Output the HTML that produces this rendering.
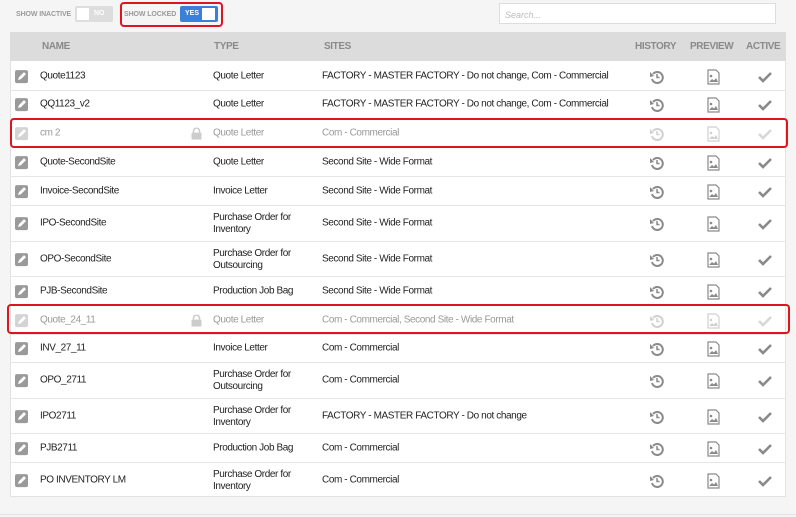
<!DOCTYPE html><html><head><style>
body{margin:0;width:796px;height:517px;background:#f5f5f5;font-family:"Liberation Sans",sans-serif;position:relative;overflow:hidden}
.a{position:absolute}
.lbl{font-size:7px;color:#999;font-weight:bold;letter-spacing:-0.1px}
.tbl{left:10px;top:32px;width:776px;height:465px;background:#fff;border:1px solid #e2e2e2;box-sizing:border-box}
.hd{left:10px;top:32px;width:776px;height:29px;background:#dcdcdc;font-size:10px;color:#8a8a8a;font-weight:bold;letter-spacing:-0.4px}
.hd span{position:absolute;top:9px}
.row{position:absolute;left:10px;width:776px;border-bottom:1px solid #e6e6e6;font-size:10px;color:#222;letter-spacing:-0.4px}
.row .c{position:absolute;top:50%;transform:translateY(-45%);line-height:12px}
.ed{left:5px;width:13px;height:13px;background:#9a9a9a;border-radius:2px}
.dim{color:#999}
.dim .ed{background:#d4d4d4}
.red{position:absolute;border:2px solid #e0141e;border-radius:4px;box-sizing:border-box}
</style></head><body>
<div class="a lbl" style="left:16px;top:11px">SHOW INACTIVE</div>
<div class="a" style="left:75px;top:6px;width:38px;height:16px;background:#ddd;border-radius:2px"><div class="a" style="left:2px;top:2px;width:12px;height:12px;background:#fff"></div><span class="a" style="left:19px;top:4px;font-size:7px;color:#fff;font-weight:bold">NO</span></div>
<div class="a lbl" style="left:124px;top:11px">SHOW LOCKED</div>
<div class="a" style="left:180px;top:6px;width:38px;height:16px;background:#3c7fd8;border-radius:2px"><span class="a" style="left:5px;top:4px;font-size:7px;color:#fff;font-weight:bold">YES</span><div class="a" style="left:22px;top:2px;width:13px;height:12px;background:#fff"></div></div>
<div class="red" style="left:120px;top:2px;width:103px;height:25px"></div>
<div class="a" style="left:499px;top:3px;width:277px;height:21px;background:#fff;border:1px solid #ddd;box-sizing:border-box;font-size:9px;color:#bbb;padding:6px 5px;font-style:italic">Search...</div>
<div class="a tbl"></div>
<div class="a hd"><span style="left:32px">NAME</span><span style="left:204px">TYPE</span><span style="left:314px">SITES</span><span style="left:625px">HISTORY</span><span style="left:680px">PREVIEW</span><span style="left:736px">ACTIVE</span></div>
<svg width="0" height="0" style="position:absolute"><defs>
<g id="h"><path d="M-4,-3 A5.5,5.5 0 1 1 -5,2" fill="none" stroke="currentColor" stroke-width="2"/><path d="M-7,-5 L-3,-1 L-7,0Z" fill="currentColor"/><path d="M0,-3 V0.5 H2.5" fill="none" stroke="currentColor" stroke-width="1.5"/></g>
<g id="p"><path d="M-5,-7 H3 L6,-4 V7 H-5Z" fill="none" stroke="currentColor" stroke-width="1.2"/><circle cx="-2" cy="-1" r="1.3" fill="currentColor"/><path d="M-4,5 L-1,2 L1,3.5 L3,1 L5,5Z" fill="currentColor"/></g>
<g id="k"><path d="M-6,0 L-2,4 L6,-4" fill="none" stroke="currentColor" stroke-width="2.6"/></g>
</defs></svg>
<div id="rows"></div>
<script>
var R=[["Quote1123","Quote Letter","FACTORY - MASTER FACTORY - Do not change, Com - Commercial",61,29],
["QQ1123_v2","Quote Letter","FACTORY - MASTER FACTORY - Do not change, Com - Commercial",90,28],
["cm 2","Quote Letter","Com - Commercial",118,29,1],
["Quote-SecondSite","Quote Letter","Second Site - Wide Format",147,29],
["Invoice-SecondSite","Invoice Letter","Second Site - Wide Format",176,29],
["IPO-SecondSite","Purchase Order for<br>Inventory","Second Site - Wide Format",205,36],
["OPO-SecondSite","Purchase Order for<br>Outsourcing","Second Site - Wide Format",241,35],
["PJB-SecondSite","Production Job Bag","Second Site - Wide Format",276,29],
["Quote_24_11","Quote Letter","Com - Commercial, Second Site - Wide Format",305,29,1],
["INV_27_11","Invoice Letter","Com - Commercial",334,28],
["OPO_2711","Purchase Order for<br>Outsourcing","Com - Commercial",362,36],
["IPO2711","Purchase Order for<br>Inventory","FACTORY - MASTER FACTORY - Do not change",398,35],
["PJB2711","Production Job Bag","Com - Commercial",433,29],
["PO INVENTORY LM","Purchase Order for<br>Inventory","Com - Commercial",462,35]];
var h="";
R.forEach(function(r){var d=r[5],ic=d?"#d0d0d0":"#8a8a8a";
h+='<div class="row'+(d?' dim':'')+'" style="top:'+r[3]+'px;height:'+r[4]+'px'+(r==R[13]?';border-bottom:none':'')+'">'+
'<div class="c ed"><svg width="13" height="13"><path d="M3,10 L4,7 L9,2 L11,4 L6,9Z" fill="#fff"/></svg></div>'+
'<div class="c" style="left:30px">'+r[0]+'</div>'+
(d?'<div class="c" style="left:181px;width:10px;height:12px"><svg width="11" height="12"><path d="M2.5,5 V3.5 A3,3 0 0 1 8.5,3.5 V5" fill="none" stroke="#ccc" stroke-width="1.6"/><rect x="0.5" y="5" width="10" height="7" rx="1" fill="#ccc"/></svg></div>':'')+
'<div class="c" style="left:203px">'+r[1]+'</div>'+
'<div class="c" style="left:312px">'+r[2]+'</div>'+
'<svg class="c" style="left:637px;color:'+ic+'" width="20" height="20" viewBox="-10 -10 20 20"><use href="#h"/></svg>'+
'<svg class="c" style="left:693px;color:'+ic+'" width="20" height="20" viewBox="-10 -10 20 20"><use href="#p"/></svg>'+
'<svg class="c" style="left:745px;color:'+(d?"#d8d8d8":"#8a8a8a")+'" width="20" height="20" viewBox="-10 -10 20 20"><use href="#k"/></svg></div>';});
document.getElementById("rows").innerHTML=h;
</script>
<div class="red" style="left:10px;top:118px;width:778px;height:30px"></div>
<div class="red" style="left:7px;top:304px;width:783px;height:30px"></div>
<div class="a" style="left:0;top:514px;width:796px;height:1px;background:#e2e2e2"></div>
</body></html>
